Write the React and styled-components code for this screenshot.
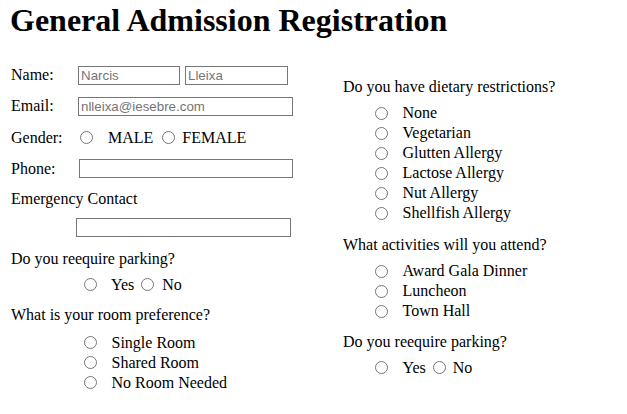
import styled, { createGlobalStyle } from "styled-components";

const GlobalStyle = createGlobalStyle`
  body {
    margin: 0;
    font-family: "Liberation Serif", "Times New Roman", serif;
    font-size: 16px;
    color: #000;
    background: #fff;
  }
`;

const Page = styled.div`
  padding: 3px 0 0 10px;
`;

const Title = styled.h1`
  margin: 0;
  font-size: 32px;
  font-weight: bold;
  line-height: 35px;
`;

const Columns = styled.div`
  display: flex;
  align-items: flex-start;
  margin-top: 27px;
`;

const Column = styled.div`
  width: ${(props) => props.$width || "auto"};
  padding-left: ${(props) => props.$pad || "0px"};
  margin-top: ${(props) => props.$offset || "0px"};
`;

const Row = styled.div`
  display: flex;
  align-items: center;
  height: 20px;
  line-height: 20px;
  padding-left: ${(props) => props.$indent || "0px"};
  margin-bottom: ${(props) => props.$after || "0px"};
  white-space: nowrap;
`;

const FieldLabel = styled.span`
  width: 67px;
  flex: none;
`;

const TextInput = styled.input`
  box-sizing: border-box;
  width: ${(props) => props.$width};
  height: 19px;
  margin: 0 0 0 ${(props) => props.$shift || "0px"};
  padding: 0 2px;
  border: 1px solid #767676;
  border-radius: 0;
  background: #fff;
  font-family: "Liberation Sans", Arial, sans-serif;
  font-size: 13.33px;
  color: #000;

  &::placeholder {
    color: #757575;
  }
`;

const Radio = styled.input.attrs({ type: "radio" })`
  width: 13px;
  height: 13px;
  margin: 0 ${(props) => props.$gap || "15px"} 0 ${(props) => props.$lead || "0px"};
  flex: none;
`;

const Choice = ({ name, label, gap, lead }) => (
  <>
    <Radio name={name} $gap={gap} $lead={lead} />
    <span>{label}</span>
  </>
);

const OptionList = ({ name, options, indent, after }) => (
  <div>
    {options.map((opt, i) => (
      <Row
        key={opt}
        $indent={indent}
        $after={i === options.length - 1 ? after : "0px"}
      >
        <Choice name={name} label={opt} />
      </Row>
    ))}
  </div>
);

const App = () => {
  return (
    <Page>
      <GlobalStyle />
      <Title>General Admission Registration</Title>
      <Columns>
        <Column $width="332px" $pad="1px">
          <Row $after="11px">
            <FieldLabel>Name:</FieldLabel>
            <TextInput $width="102px" placeholder="Narcis" />
            <TextInput $width="103px" $shift="5px" placeholder="Lleixa" />
          </Row>
          <Row $after="11.5px">
            <FieldLabel>Email:</FieldLabel>
            <TextInput $width="215px" placeholder="nlleixa@iesebre.com" />
          </Row>
          <Row $after="11px">
            <FieldLabel>Gender:</FieldLabel>
            <Choice name="gender" label="MALE" lead="2px" gap="15px" />
            <Choice name="gender" label="FEMALE" lead="9px" gap="7px" />
          </Row>
          <Row $after="10.5px">
            <FieldLabel>Phone:</FieldLabel>
            <TextInput $width="214px" $shift="1px" />
          </Row>
          <Row $after="8.5px">Emergency Contact</Row>
          <Row $after="11px" $indent="65px">
            <TextInput $width="215px" />
          </Row>
          <Row $after="6px">Do you reequire parking?</Row>
          <Row $after="10.5px" $indent="73px">
            <Choice name="parking" label="Yes" gap="14px" />
            <Choice name="parking" label="No" lead="7px" gap="8px" />
          </Row>
          <Row $after="7.5px">What is your room preference?</Row>
          <OptionList
            name="room"
            indent="72.5px"
            options={["Single Room", "Shared Room", "No Room Needed"]}
          />
        </Column>
        <Column $offset="12px">
          <Row $after="6px">Do you have dietary restrictions?</Row>
          <OptionList
            name="diet"
            indent="31.5px"
            after="11.5px"
            options={[
              "None",
              "Vegetarian",
              "Glutten Allergy",
              "Lactose Allergy",
              "Nut Allergy",
              "Shellfish Allergy",
            ]}
          />
          <Row $after="6.5px">What activities will you attend?</Row>
          <OptionList
            name="activities"
            indent="31.5px"
            after="10.5px"
            options={["Award Gala Dinner", "Luncheon", "Town Hall"]}
          />
          <Row $after="6px">Do you reequire parking?</Row>
          <Row $indent="31.5px">
            <Choice name="parking2" label="Yes" gap="15px" />
            <Choice name="parking2" label="No" lead="7px" gap="7px" />
          </Row>
        </Column>
      </Columns>
    </Page>
  );
};

export default App;
